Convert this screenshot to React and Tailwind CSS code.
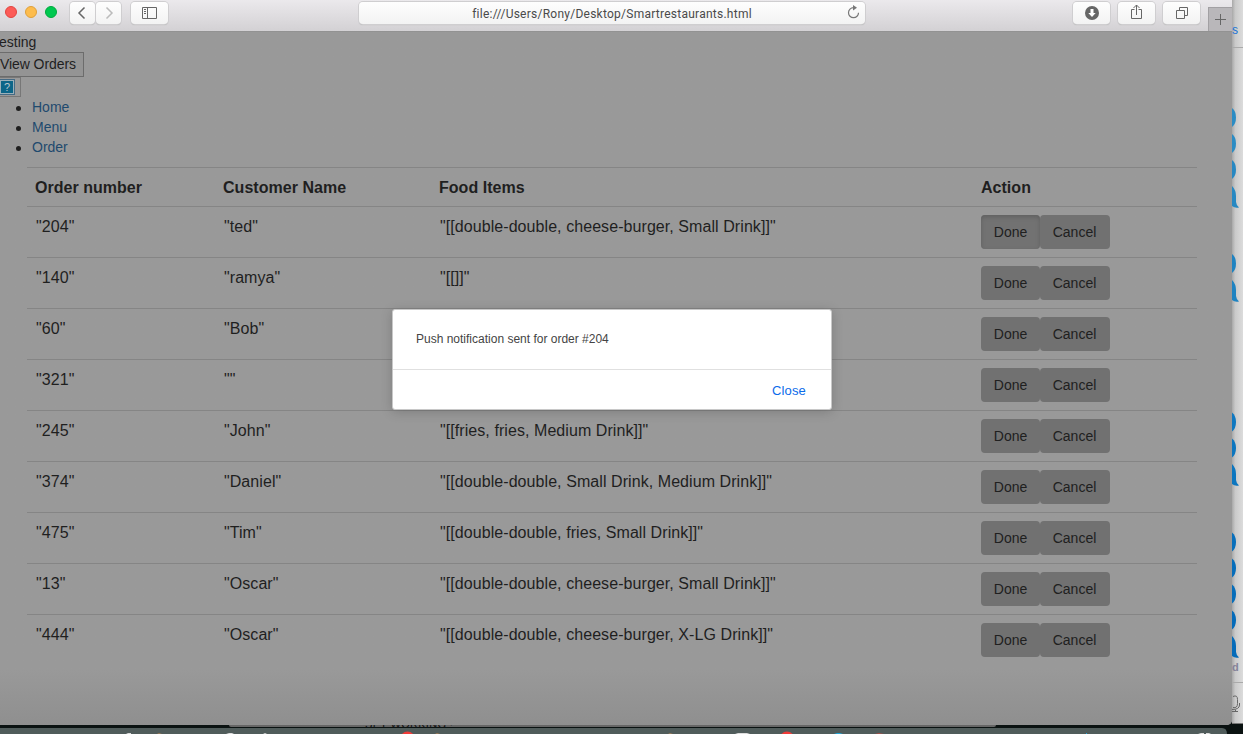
import React from 'react';

const orders = [
  ['"204"', '"ted"', '"[[double-double, cheese-burger, Small Drink]]"'],
  ['"140"', '"ramya"', '"[[]]"'],
  ['"60"', '"Bob"', ''],
  ['"321"', '""', ''],
  ['"245"', '"John"', '"[[fries, fries, Medium Drink]]"'],
  ['"374"', '"Daniel"', '"[[double-double, Small Drink, Medium Drink]]"'],
  ['"475"', '"Tim"', '"[[double-double, fries, Small Drink]]"'],
  ['"13"', '"Oscar"', '"[[double-double, cheese-burger, Small Drink]]"'],
  ['"444"', '"Oscar"', '"[[double-double, cheese-burger, X-LG Drink]]"'],
];

const columns = 'grid grid-cols-[188px_216px_542px_224px] border-t border-[#858585]';

function ToolButton({ className, children }) {
  return (
    <div
      className={`flex h-[22px] items-center justify-center rounded-[4px] bg-linear-to-b from-[#fefefe] to-[#f3f3f3] shadow-[0_0_0_1px_#cfced0,0_1px_1px_#aaa] ${className}`}
    >
      {children}
    </div>
  );
}

function Toolbar() {
  return (
    <div className="flex h-8 items-start border-b border-[#929292] bg-linear-to-b from-[#ebe9ec] to-[#d3d1d4]">
      <div className="flex w-[70px] gap-2 pt-[6px] pl-[5px]">
        <span className="h-3 w-3 rounded-full border border-[#e2443f] bg-[#fc5b57]" />
        <span className="h-3 w-3 rounded-full border border-[#dfa03a] bg-[#fdbc4d]" />
        <span className="h-3 w-3 rounded-full border border-[#00a93c] bg-[#00c850]" />
      </div>
      <div className="flex gap-px pt-[2px]">
        <ToolButton className="w-[25px]">
          <svg className="-ml-[2px]" width="9" height="14" viewBox="0 0 9 14" fill="none" stroke="#666" strokeWidth="1.500"><path d="M7.500 1.500 2 7l5.500 5.500" /></svg>
        </ToolButton>
        <ToolButton className="w-[25px]">
          <svg className="ml-[2px]" width="9" height="14" viewBox="0 0 9 14" fill="none" stroke="#bbb" strokeWidth="1.500"><path d="M1.500 1.500 7 7l-5.500 5.500" /></svg>
        </ToolButton>
      </div>
      <div className="ml-[10px] pt-[2px]">
        <ToolButton className="w-[37px]">
          <svg width="15" height="12" viewBox="0 0 15 12" fill="none" stroke="#666"><path d="M.5.5h14v11H.5zM5.500.5v11M2 2.500h2M2 4.500h2M2 6.500h2" /></svg>
        </ToolButton>
      </div>
      <div className="ml-[191px] pt-[2px]">
        <ToolButton className="relative w-[506px]">
          <span className="pt-px text-[12px] tracking-[0.25px] text-[#4a4a4a]" style={{ fontFamily: 'Roboto, "Liberation Sans", sans-serif' }}>file:///Users/Rony/Desktop/Smartrestaurants.html</span>
          <svg className="absolute top-[3px] right-[5px]" width="13" height="14" viewBox="0 0 13 14" fill="none" stroke="#777" strokeWidth="1.200"><path d="M6.500 2.700A5 5 0 1 0 11.500 7.700" /><path d="M6 0l4 2.700-4 2.700z" fill="#777" stroke="none" /></svg>
        </ToolButton>
      </div>
      <div className="ml-[208px] flex gap-2 pt-[2px]">
        <ToolButton className="w-[37px]">
          <svg width="14" height="14" viewBox="0 0 14 14"><circle cx="7" cy="7" r="7" fill="#666" /><path d="M5.500 3h3v4h2.200L7 11 3.300 7h2.200z" fill="#fff" /></svg>
        </ToolButton>
        <ToolButton className="w-[37px]">
          <svg className="-mt-[2px]" width="13" height="16" viewBox="0 0 13 16" fill="none" stroke="#666"><path d="M4.500 5.500H1.500v9h10v-9h-3M6.500 11V1M3.500 4l3-3 3 3" /></svg>
        </ToolButton>
        <ToolButton className="w-[37px]">
          <svg width="12" height="12" viewBox="0 0 12 12" fill="none" stroke="#666"><path d="M.5 3.500h8v8h-8zM3.500 3.500v-3h8v8h-3" /></svg>
        </ToolButton>
      </div>
      <div className="mt-[7px] ml-[8px] flex h-6 flex-1 items-center justify-center border-t border-l border-[#a2a0a3] bg-[#b9b7ba]">
        <svg width="11" height="11" viewBox="0 0 11 11" stroke="#666"><path d="M5.500 0v11M0 5.500h11" /></svg>
      </div>
    </div>
  );
}

function ActionButtons({ pressed }) {
  return (
    <div className="flex pt-2 pl-2 text-[14px] tracking-normal text-[#202020]">
      <button className={pressed
        ? 'h-[34px] w-[59px] rounded-[4px] bg-[#727272] shadow-[inset_0_2px_4px_#606060]'
        : 'h-[34px] w-[59px] rounded-[4px] bg-[#717171]'}>Done</button>
      <button className="h-[34px] w-[70px] rounded-[4px] bg-[#717171] pr-px">Cancel</button>
    </div>
  );
}

function OrdersTable() {
  return (
    <div className="mt-[10px] ml-[27px] w-[1170px] text-[16px] leading-[23px]">
      <div className={`${columns} h-[39px] pt-[8px] font-bold tracking-[0.03px]`}>
        {['Order number', 'Customer Name', 'Food Items', 'Action'].map((h) => <div className="pl-2" key={h}>{h}</div>)}
      </div>
      {orders.map((row, i) => (
        <div key={i} className={`${columns} h-[51px] tracking-[0.07px]`}>
          {row.map((cell, c) => <div key={c} className="pt-[8px] pl-[9px] whitespace-nowrap">{cell}</div>)}
          <ActionButtons pressed={i === 0} />
        </div>
      ))}
    </div>
  );
}

function Dialog() {
  return (
    <div className="absolute top-[309px] left-[392px] flex h-[101px] w-[440px] flex-col rounded-[3px] border border-[#c8c8c8] bg-white shadow-[0_2px_12px_rgba(0,0,0,0.18)]">
      <div className="h-[60px] border-b border-[#e0e0e0] pt-[20px] pl-[23px] text-[12px] leading-[18px] text-[#444]">Push notification sent for order #204</div>
      <div className="flex flex-1 items-center justify-end pt-[2px] pr-[25px] text-[13px] tracking-[0.15px] text-[#0b6bea]">Close</div>
    </div>
  );
}

function Browser() {
  return (
    <div className="relative z-10 flex h-[725px] w-[1232px] shrink-0 flex-col overflow-hidden rounded-br-[5px] bg-[#999]">
      <Toolbar />
      <div className="flex flex-1 flex-col bg-linear-to-b from-[#999] from-92% to-[#8f8f8f] text-[14px] leading-5 text-[#1f1f1f]">
        <div className="-ml-[1px] h-5">esting</div>
        <div className="flex h-[25px] w-[84px] items-center border border-l-0 border-[#6c6c6c] bg-[#949494] pb-[2px] tracking-[-0.08px]">View Orders</div>
        <div className="flex h-[20px] w-[21px] items-center border border-l-0 border-[#777]">
          <span className="flex h-4 w-[15px] items-center justify-center border border-l-0 border-[#466b85] bg-[#0c6588] text-[11px] text-[#b8c7ce] shadow-[inset_0_0_0_1px_#9bb0b9]">?</span>
        </div>
        <ul className="ml-[16px] text-[#1f4a6e]">
          {['Home', 'Menu', 'Order'].map((item) => (
            <li key={item} className="flex h-5 items-center"><span className="mt-[2px] mr-[11px] h-[5px] w-[5px] rounded-full bg-[#1f1f1f]" />{item}</li>
          ))}
        </ul>
        <OrdersTable />
      </div>
      <Dialog />
    </div>
  );
}

const circles = [[117, '#2b8cc4'], [143, '#2b8cc4'], [169, '#2788c2'], [263, '#1f83c1'], [421.5, '#0f78c0'], [447.5, '#0c76bf'], [541.5, '#086fbb'], [567.5, '#066dba'], [593.5, '#066dba'], [619.5, '#056bb9']];
const tails = [[187, '#2788c2'], [281, '#1f83c1'], [465, '#0c76bf'], [637, '#056bb9']];

function MessagesStrip() {
  return (
    <div className="flex h-[724px] w-[11px] flex-col overflow-hidden border-b border-[#777] bg-linear-to-r from-[#a8a8a8] via-[#cacaca] via-30% to-[#dcdcdc] text-[12px]">
      <div className="h-[48px] border-b border-[#aaa] pt-[22px] leading-[16px] text-[#1673d6]">s</div>
      <svg className="block shrink-0" width="11" height="611" viewBox="0 48 11 611">
        {circles.map(([y, fill]) => <path key={y} fill={fill} d={`M0 ${y - 9}Q4 ${y - 6} 4 ${y + 0.5}T0 ${y + 10}Z`.replace('T0', `Q4 ${y + 7} 0`)} />)}
        {tails.map(([y, fill]) => <path key={y} fill={fill} d={`M0 ${y - 1}Q4 ${y + 3} 4 ${y + 9}V${y + 15}Q4.500 ${y + 19} 7 ${y + 20.500}Q3 ${y + 21.500} 0 ${y + 19}Z`} />)}
      </svg>
      <div className="h-[24px] shrink-0 border-b border-[#aaa] text-[11px] leading-[16px] font-bold text-[#858399]">d</div>
      <svg className="mt-[12px] block shrink-0" width="11" height="18" viewBox="0 0 11 18" fill="none" stroke="#666"><path d="M1 1.500Q5.500 -.5 5.500 4.500v4q0 5-4.500 4M7.500 8v2q0 4.500-7.500 4.500M3.500 14.500v2M0 16.500h6" /></svg>
    </div>
  );
}

function Dock() {
  return (
    <div className="flex h-[9px] flex-col bg-[#0a1211]">
      <div className="h-[3px]">
        <div className="relative ml-[229px] h-[2px] w-[767px] overflow-hidden rounded-b bg-[#666]">
          <span className="absolute -top-[7px] left-[136px] text-[11px] leading-[12px] tracking-[0.3px] text-[#111]">SET WORKING !</span>
        </div>
      </div>
      <svg className="block" width="1243" height="6" viewBox="0 0 1243 6">
        <path d="M0 0h1222q5 0 5 6H0z" fill="#505c5b" />
        <g fill="#f23b38"><circle cx="407.500" cy="11" r="7.500" /><circle cx="787" cy="11" r="7.500" /></g>
        <g fill="#ddd"><path d="M126 6l2-1h3v1zM226 6l3-1h5l-2 1zM263 6l2-1 2 1zM735 6l3-1h9l3 1zM1198 6l3-1h3v1zM1206 6v-1h3l2 1z" /></g>
        <path d="M834 6l3-1h3l3 1zM1086 5h1v1h-1z" fill="#20a6d8" />
        <path d="M875 6l4-1 5 1z" fill="#a94f49" />
        <path d="M157 6l2-1 3 1zM435 6l2-1 3 1zM668 6l2-1 3 1z" fill="#9f7c59" />
      </svg>
    </div>
  );
}

export default function App() {
  return (
    <div className="flex h-[734px] w-[1243px] flex-col overflow-hidden bg-[#0a1211]" style={{ fontFamily: '"Liberation Sans", Arial, sans-serif' }}>
      <div className="flex h-[725px]"><Browser /><MessagesStrip /></div>
      <Dock />
    </div>
  );
}
